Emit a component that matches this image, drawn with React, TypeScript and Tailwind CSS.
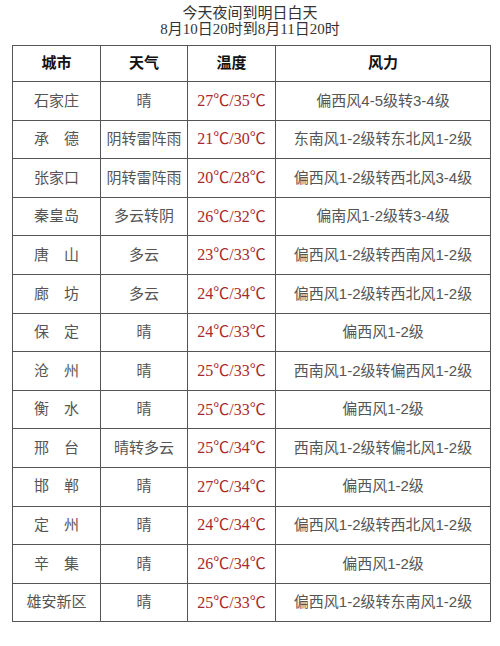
const rows: [string, string, string, string][] = [
  ["石家庄", "晴", "27℃/35℃", "偏西风4-5级转3-4级"],
  ["承　德", "阴转雷阵雨", "21℃/30℃", "东南风1-2级转东北风1-2级"],
  ["张家口", "阴转雷阵雨", "20℃/28℃", "偏西风1-2级转西北风3-4级"],
  ["秦皇岛", "多云转阴", "26℃/32℃", "偏南风1-2级转3-4级"],
  ["唐　山", "多云", "23℃/33℃", "偏西风1-2级转西南风1-2级"],
  ["廊　坊", "多云", "24℃/34℃", "偏西风1-2级转西北风1-2级"],
  ["保　定", "晴", "24℃/33℃", "偏西风1-2级"],
  ["沧　州", "晴", "25℃/33℃", "西南风1-2级转偏西风1-2级"],
  ["衡　水", "晴", "25℃/33℃", "偏西风1-2级"],
  ["邢　台", "晴转多云", "25℃/34℃", "西南风1-2级转偏北风1-2级"],
  ["邯　郸", "晴", "27℃/34℃", "偏西风1-2级"],
  ["定　州", "晴", "24℃/34℃", "偏西风1-2级转西北风1-2级"],
  ["辛　集", "晴", "26℃/34℃", "偏西风1-2级"],
  ["雄安新区", "晴", "25℃/33℃", "偏西风1-2级转东南风1-2级"],
];

const serif = {
  fontFamily: '"Liberation Serif", "Noto Sans CJK SC", serif',
};
const sans = {
  fontFamily: '"Liberation Sans", "Noto Sans CJK SC", sans-serif',
};

export default function App() {
  return (
    <div className="w-[500px] h-[646px] bg-white" style={serif}>
      <div className="pt-[5px] text-center text-[15px] leading-[16px] text-[#333]">
        <div>今天夜间到明日白天</div>
        <div>8月10日20时到8月11日20时</div>
      </div>
      <table className="ml-[12px] mt-[8px] w-[478px] border-collapse table-fixed">
        <colgroup>
          <col className="w-[88px]" />
          <col className="w-[87px]" />
          <col className="w-[88px]" />
          <col className="w-[215px]" />
        </colgroup>
        <thead>
          <tr className="h-[36px]">
            {["城市", "天气", "温度", "风力"].map((h) => (
              <th key={h} className="border border-[#555] text-[15px] font-bold text-[#111] p-0">
                {h}
              </th>
            ))}
          </tr>
        </thead>
        <tbody>
          {rows.map((r) => (
            <tr key={r[0]} className="h-[38.6px]">
              <td className="border border-[#555] text-center text-[15px] text-[#555] p-0">{r[0]}</td>
              <td className="border border-[#555] text-center text-[15px] text-[#555] p-0">{r[1]}</td>
              <td className="border border-[#555] text-center text-[16px] text-[#a8282c] p-0 whitespace-nowrap">{r[2]}</td>
              <td
                className="border border-[#555] text-center text-[15px] text-[#555] p-0 whitespace-nowrap"
                style={sans}
              >
                {r[3]}
              </td>
            </tr>
          ))}
        </tbody>
      </table>
    </div>
  );
}
